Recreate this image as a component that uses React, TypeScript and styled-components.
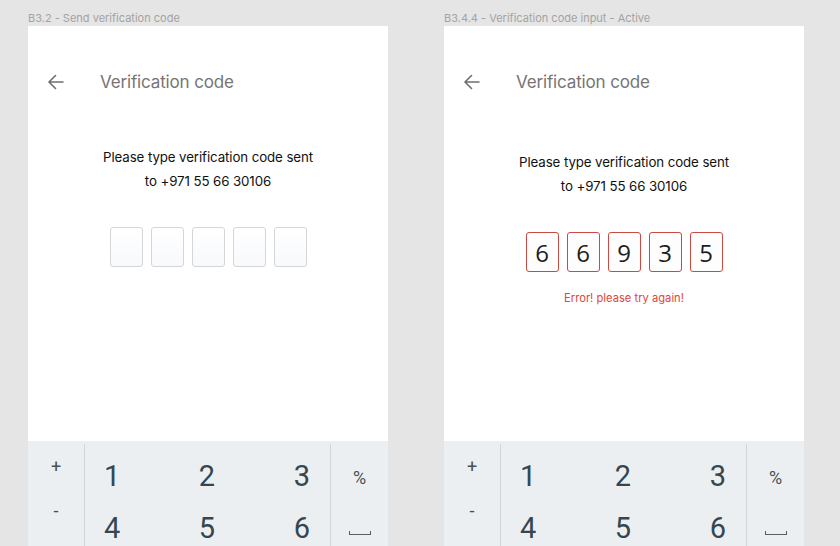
import React from "react";
import styled, { createGlobalStyle } from "styled-components";

const Global = createGlobalStyle`
  html, body { margin: 0; padding: 0; background: #e5e5e5; overflow: hidden; }
  body { font-family: Inter, "Noto Sans", sans-serif; }
`;

const Page = styled.div`
  display: flex;
  gap: 56px;
  padding-left: 28px;
  padding-top: 11px;
  height: 546px;
  box-sizing: border-box;
  overflow: hidden;
`;

const Artboard = styled.div`
  display: flex;
  flex-direction: column;
  width: 360px;
`;

const Label = styled.div`
  font-size: 11px;
  line-height: 15px;
  color: #a3a3a3;
  white-space: nowrap;
`;

const Screen = styled.div`
  background: #fff;
  display: flex;
  flex-direction: column;
  height: 560px;
`;

const Content = styled.div<{ $shift: number }>`
  height: 415px;
  flex: none;
  display: flex;
  flex-direction: column;
  align-items: center;
  padding-top: 44px;
  box-sizing: border-box;
  & > .msg { margin-top: ${(p) => 51 + p.$shift}px; }
`;

const Header = styled.div`
  align-self: stretch;
  display: flex;
  align-items: center;
  height: 24px;
  padding-left: 20px;
  gap: 36px;
`;

const Title = styled.div`
  font-size: 17px;
  color: #757575;
  letter-spacing: -0.15px;
`;

const Message = styled.div`
  font-size: 13.3px;
  line-height: 24px;
  color: #111;
  text-align: center;
  letter-spacing: -0.1px;
`;

const Boxes = styled.div`
  display: flex;
  gap: 8px;
  margin-top: 34px;
`;

const CodeBox = styled.div<{ $error?: boolean }>`
  width: 33px;
  height: 40px;
  box-sizing: border-box;
  border-radius: 3px;
  border: 1px solid ${(p) => (p.$error ? "#c94a42" : "#d4d6d8")};
  background: ${(p) =>
    p.$error ? "#fdfdfd" : "linear-gradient(#ffffff, #f7f9fc)"};
  display: flex;
  align-items: center;
  justify-content: center;
  font-size: 24px;
  color: #1d1d1d;
  font-family: "Open Sans", Inter, sans-serif;
`;

const ErrorText = styled.div`
  margin-top: 18px;
  font-size: 11.2px;
  line-height: 16px;
  color: #e2453c;
`;

const Keyboard = styled.div`
  flex: 1;
  background: #eceff1;
  display: grid;
  grid-template-columns: 57px 1fr 58px;
  font-family: Roboto, "Noto Sans", sans-serif;
`;

const SideCol = styled.div<{ $right?: boolean }>`
  display: flex;
  flex-direction: column;
  align-items: center;
  margin-top: 3px;
  ${(p) =>
    p.$right
      ? "border-left: 1px solid #d3d6d8;"
      : "border-right: 1px solid #d3d6d8;"}
`;

const SideKey = styled.div<{ $h: number }>`
  height: ${(p) => p.$h}px;
  display: flex;
  align-items: center;
  justify-content: center;
  font-size: 18px;
  color: #4a4f53;
`;

const Digits = styled.div`
  display: grid;
  grid-template-columns: repeat(3, 1fr);
  grid-auto-rows: 52px;
  padding: 9px 20px 0 19px;
`;

const Digit = styled.div<{ $align: string }>`
  display: flex;
  align-items: center;
  justify-content: ${(p) => p.$align};
  font-size: 29px;
  color: #37464e;
`;

const SpaceGlyph = styled.div`
  width: 22px;
  height: 4px;
  border: 1.5px solid #5a5f63;
  border-top: none;
  box-sizing: border-box;
`;

const Arrow = () => (
  <svg width="16" height="16" viewBox="0 0 16 16" fill="none">
    <path
      d="M15 8H1.5M7.5 1.5L1 8l6.5 6.5"
      stroke="#6f6f6f"
      strokeWidth="1.6"
      strokeLinecap="round"
      strokeLinejoin="round"
    />
  </svg>
);

const aligns = ["flex-start", "center", "flex-end"];

const Pad = () => (
  <Keyboard>
    <SideCol>
      <SideKey $h={44}>+</SideKey>
      <SideKey $h={44}>-</SideKey>
    </SideCol>
    <Digits>
      {["1", "2", "3", "4", "5", "6"].map((d, i) => (
        <Digit key={d} $align={aligns[i % 3]}>
          {d}
        </Digit>
      ))}
    </Digits>
    <SideCol $right>
      <SideKey $h={66}>%</SideKey>
      <SideKey $h={46}>
        <SpaceGlyph />
      </SideKey>
    </SideCol>
  </Keyboard>
);

const Verify = ({
  label,
  code,
  error,
  shift,
}: {
  label: string;
  code?: string[];
  error?: boolean;
  shift: number;
}) => (
  <Artboard>
    <Label>{label}</Label>
    <Screen>
      <Content $shift={shift}>
        <Header>
          <Arrow />
          <Title>Verification code</Title>
        </Header>
        <Message className="msg">
          Please type verification code sent
          <br />
          to +971 55 66 30106
        </Message>
        <Boxes>
          {(code ?? ["", "", "", "", ""]).map((c, i) => (
            <CodeBox key={i} $error={error}>
              {c}
            </CodeBox>
          ))}
        </Boxes>
        {error && <ErrorText>Error! please try again!</ErrorText>}
      </Content>
      <Pad />
    </Screen>
  </Artboard>
);

export default function App() {
  return (
    <>
      <Global />
      <Page>
        <Verify label="B3.2 - Send verification code" shift={0} />
        <Verify
          label="B3.4.4 - Verification code input - Active"
          code={["6", "6", "9", "3", "5"]}
          error
          shift={5}
        />
      </Page>
    </>
  );
}
